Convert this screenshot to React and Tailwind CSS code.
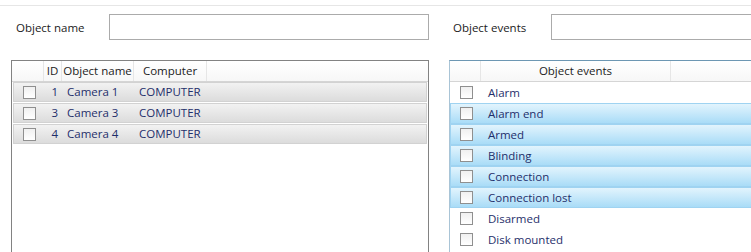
import React from "react";

const font = { fontFamily: "'Open Sans', 'Liberation Sans', sans-serif" };

const objects = [
  { id: 1, name: "Camera 1", computer: "COMPUTER" },
  { id: 3, name: "Camera 3", computer: "COMPUTER" },
  { id: 4, name: "Camera 4", computer: "COMPUTER" },
];

const events = [
  { name: "Alarm", sel: false },
  { name: "Alarm end", sel: true },
  { name: "Armed", sel: true },
  { name: "Blinding", sel: true },
  { name: "Connection", sel: true },
  { name: "Connection lost", sel: true },
  { name: "Disarmed", sel: false },
  { name: "Disk mounted", sel: false },
];

const Box = () => (
  <div className="w-[13px] h-[13px] border border-[#8f8f8f] bg-gradient-to-b from-[#f0f0f0] to-white shrink-0"></div>
);

const App = () => {
  return (
    <div
      className="w-[751px] h-[252px] bg-white overflow-hidden text-[11.5px] text-[#1b1b1b] leading-none whitespace-nowrap"
      style={font}
    >
      <div className="h-[5px]"></div>
      <div className="border-t border-[#e6e6e6]"></div>

      <div className="flex pt-[8px] h-[34px]">
        <div className="w-[449px] flex items-center">
          <span className="pl-[16px] w-[109px] pt-px">Object name</span>
          <div className="w-[320px] h-[26px] border border-[#ababab] bg-white"></div>
        </div>
        <div className="flex-1 flex items-center">
          <span className="pl-[4px] w-[102px] pt-px">Object events</span>
          <div className="flex-1 h-[26px] border border-[#ababab] border-r-0 bg-white"></div>
        </div>
      </div>

      <div className="flex mt-[20px]">
        <div className="ml-[11px] w-[418px] h-[200px] border border-[#828282] bg-white">
          <div className="flex h-[21px] border-b border-[#d5d5d5] bg-gradient-to-b from-white to-[#f7f7f7] items-center">
            <div className="w-[32px] h-full border-r border-[#e6e6e6]"></div>
            <div className="w-[18px] h-full border-r border-[#e6e6e6] flex items-center justify-center">ID</div>
            <div className="w-[72px] h-full border-r border-[#e6e6e6] flex items-center justify-center">Object name</div>
            <div className="w-[73px] h-full border-r border-[#e6e6e6] flex items-center justify-center">Computer</div>
          </div>
          <div className="px-px">
            {objects.map((o) => (
              <div
                key={o.id}
                className="flex items-center h-[20px] mb-px border border-[#d2d2d2] bg-gradient-to-b from-[#f2f2f2] to-[#dcdcdc] text-[#1f2f6b]"
              >
                <div className="w-[29px] flex justify-center pl-[2px]"><Box /></div>
                <div className="w-[19px] text-right pr-[4px]">{o.id}</div>
                <div className="w-[72px] pl-[5px]">{o.name}</div>
                <div className="pl-[5px]">{o.computer}</div>
              </div>
            ))}
          </div>
        </div>

        <div className="ml-[20px] flex-1 h-[200px] border border-[#6d97b3] border-l-[#a9c4d6] border-r-0 bg-white">
          <div className="flex h-[21px] border-b border-[#d5d5d5] bg-gradient-to-b from-white to-[#f7f7f7] items-center">
            <div className="w-[31px] h-full border-r border-[#e6e6e6]"></div>
            <div className="w-[190px] h-full border-r border-[#e6e6e6] flex items-center justify-center">Object events</div>
          </div>
          {events.map((e) => (
            <div
              key={e.name}
              className={
                e.sel
                  ? "flex items-center h-[21px] border border-[#9fd3f1] border-r-0 bg-gradient-to-b from-[#e2f4fd] to-[#a9dcf7] text-[#1f2f6b]"
                  : "flex items-center h-[21px] border border-transparent text-[#1f2f6b]"
              }
            >
              <div className="w-[30px] flex justify-center"><Box /></div>
              <div className="pl-[7px]">{e.name}</div>
            </div>
          ))}
        </div>
      </div>
    </div>
  );
};

export default App;
